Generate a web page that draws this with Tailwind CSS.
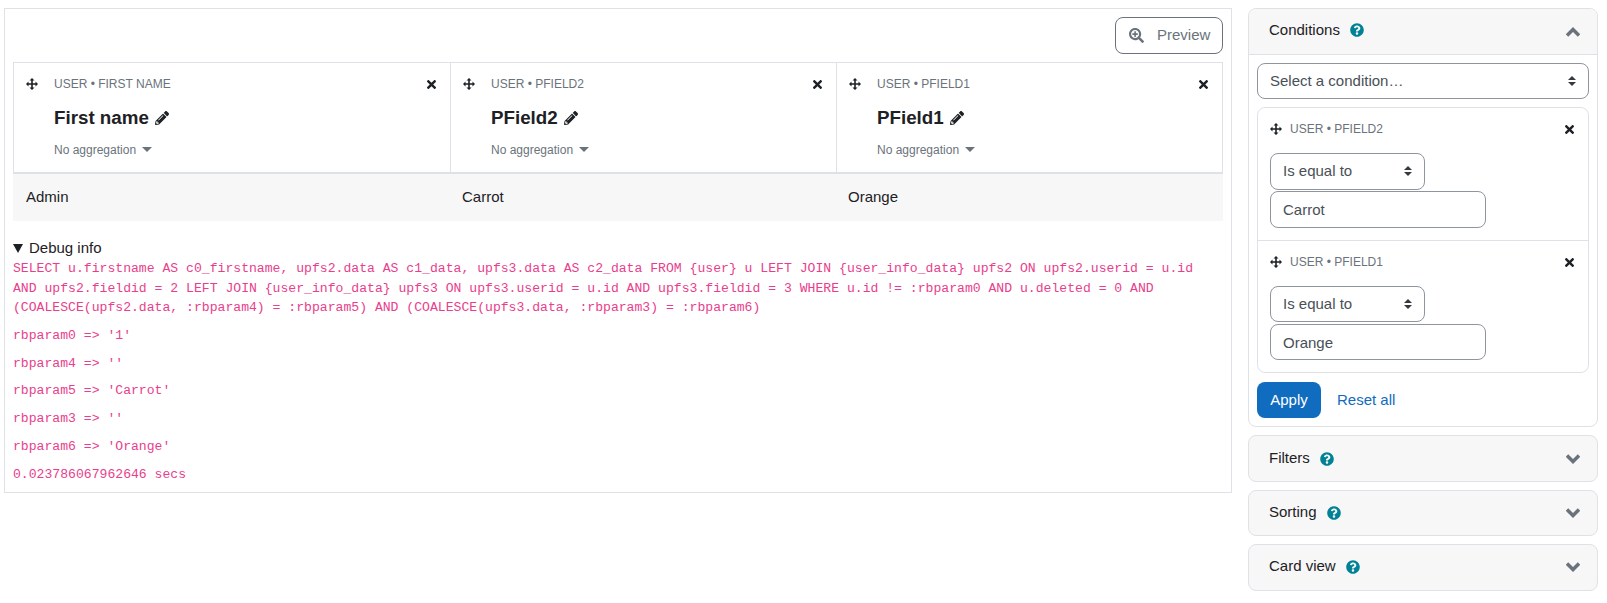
<!DOCTYPE html>
<html lang="en">
<head>
    <meta charset="UTF-8">
    <title>Report builder</title>
    <script src="https://cdn.jsdelivr.net/npm/@tailwindcss/browser@4"></script>
</head>
<body class="bg-white font-['Liberation_Sans',Arial,sans-serif] text-[15px] leading-[22.5px] text-[#1d2125] overflow-hidden">
<div class="flex items-start pt-2 pl-1 w-[1607px] h-[603px]">

    <!-- report -->
    <div class="w-[1228px] h-[485px] border border-[#dee2e6] px-2 pt-2 shrink-0">
        <div class="flex justify-end">
            <button class="h-[37px] w-[108px] flex items-center border border-[#6a737b] rounded-lg text-[#6a737b] pl-[13px]">
                <svg class="w-[15px] h-[15px] mr-[13px] fill-current" viewBox="0 0 512 512"><path d="M304 192v32c0 6.6-5.4 12-12 12h-56v56c0 6.6-5.4 12-12 12h-32c-6.6 0-12-5.4-12-12v-56h-56c-6.6 0-12-5.4-12-12v-32c0-6.6 5.4-12 12-12h56v-56c0-6.6 5.4-12 12-12h32c6.6 0 12 5.4 12 12v56h56c6.6 0 12 5.4 12 12zm201 284.7L476.7 505c-9.4 9.4-24.6 9.4-33.9 0L343 405.3c-4.5-4.5-7-10.6-7-17V372c-35.3 27.6-79.7 44-128 44C93.1 416 0 322.9 0 208S93.1 0 208 0s208 93.1 208 208c0 48.3-16.4 92.7-44 128h16.3c6.4 0 12.5 2.5 17 7l99.7 99.7c9.3 9.4 9.3 24.6 0 34zM344 208c0-75.2-60.8-136-136-136S72 132.8 72 208s60.8 136 136 136 136-60.8 136-136z"/></svg>
                Preview
            </button>
        </div>

        <div class="mt-2 w-[1210px]">
            <div class="grid grid-cols-[437px_386px_385px] h-[112px] border-t border-x border-[#dee2e6] border-b-2">
                <div class="border-r border-[#dee2e6] pl-3 pr-3.5 pt-2.5 relative">
                    <div class="flex items-center h-[22px]">
                        <svg class="w-3 h-3 fill-[#1d2125] mr-4 shrink-0" viewBox="0 0 12 12"><path d="M6 0 8.5 2.5H6.8V5.2H9.5V3.5L12 6 9.5 8.5V6.8H6.8V9.5H8.5L6 12 3.5 9.5H5.2V6.8H2.5V8.5L0 6 2.5 3.5V5.2H5.2V2.5H3.5Z"/></svg>
                        <span class="text-xs text-[#6a737b] uppercase">User • First name</span>
                        <svg class="w-[9px] h-[9px] fill-[#1d2125] ml-auto" viewBox="0 80 352 352"><path d="M242.72 256l100.07-100.07c12.28-12.28 12.28-32.19 0-44.48l-22.24-22.24c-12.28-12.28-32.19-12.28-44.48 0L176 189.28 75.93 89.21c-12.28-12.28-32.19-12.28-44.48 0L9.21 111.45c-12.28 12.28-12.28 32.19 0 44.48L109.28 256 9.21 356.07c-12.28 12.28-12.28 32.19 0 44.48l22.24 22.24c12.28 12.28 32.2 12.28 44.48 0L176 322.72l100.07 100.07c12.28 12.28 32.2 12.28 44.48 0l22.24-22.24c12.28-12.28 12.28-32.19 0-44.48L242.72 256z"/></svg>
                    </div>
                    <div class="flex items-center pl-7 mt-[11px] h-[24px] text-[18.75px] font-bold">
                        First name
                        <svg class="w-[14px] h-[14px] fill-[#1d2125] ml-1.5" viewBox="0 0 512 512"><path d="M497.9 142.1l-46.1 46.1c-4.7 4.7-12.3 4.7-17 0l-111-111c-4.7-4.7-4.7-12.3 0-17l46.1-46.1c18.7-18.7 49.1-18.7 67.9 0l60.1 60.1c18.8 18.7 18.8 49.1 0 67.9zM284.2 99.8L21.6 362.4.4 483.9c-2.9 16.4 11.4 30.6 27.8 27.8l121.5-21.3 262.6-262.6c4.7-4.7 4.7-12.3 0-17l-111-111c-4.8-4.7-12.4-4.7-17.1 0zM124.1 339.9c-5.5-5.5-5.5-14.3 0-19.8l154-154c5.5-5.5 14.3-5.5 19.8 0s5.5 14.3 0 19.8l-154 154c-5.5 5.5-14.3 5.5-19.8 0zM88 424h48v36.3l-64.5 11.3-31.1-31.1L51.7 376H88v48z"/></svg>
                    </div>
                    <div class="flex items-center pl-7 mt-[9px] h-[22px] text-xs text-[#6a737b]">
                        No aggregation
                        <span class="ml-1.5 w-0 h-0 border-x-[5px] border-x-transparent border-t-[5px] border-t-[#6a737b] -mt-0.5"></span>
                    </div>
                </div>
                <div class="border-r border-[#dee2e6] pl-3 pr-3.5 pt-2.5">
                    <div class="flex items-center h-[22px]">
                        <svg class="w-3 h-3 fill-[#1d2125] mr-4 shrink-0" viewBox="0 0 12 12"><path d="M6 0 8.5 2.5H6.8V5.2H9.5V3.5L12 6 9.5 8.5V6.8H6.8V9.5H8.5L6 12 3.5 9.5H5.2V6.8H2.5V8.5L0 6 2.5 3.5V5.2H5.2V2.5H3.5Z"/></svg>
                        <span class="text-xs text-[#6a737b] uppercase">User • PField2</span>
                        <svg class="w-[9px] h-[9px] fill-[#1d2125] ml-auto" viewBox="0 80 352 352"><path d="M242.72 256l100.07-100.07c12.28-12.28 12.28-32.19 0-44.48l-22.24-22.24c-12.28-12.28-32.19-12.28-44.48 0L176 189.28 75.93 89.21c-12.28-12.28-32.19-12.28-44.48 0L9.21 111.45c-12.28 12.28-12.28 32.19 0 44.48L109.28 256 9.21 356.07c-12.28 12.28-12.28 32.19 0 44.48l22.24 22.24c12.28 12.28 32.2 12.28 44.48 0L176 322.72l100.07 100.07c12.28 12.28 32.2 12.28 44.48 0l22.24-22.24c12.28-12.28 12.28-32.19 0-44.48L242.72 256z"/></svg>
                    </div>
                    <div class="flex items-center pl-7 mt-[11px] h-[24px] text-[18.75px] font-bold">
                        PField2
                        <svg class="w-[14px] h-[14px] fill-[#1d2125] ml-1.5" viewBox="0 0 512 512"><path d="M497.9 142.1l-46.1 46.1c-4.7 4.7-12.3 4.7-17 0l-111-111c-4.7-4.7-4.7-12.3 0-17l46.1-46.1c18.7-18.7 49.1-18.7 67.9 0l60.1 60.1c18.8 18.7 18.8 49.1 0 67.9zM284.2 99.8L21.6 362.4.4 483.9c-2.9 16.4 11.4 30.6 27.8 27.8l121.5-21.3 262.6-262.6c4.7-4.7 4.7-12.3 0-17l-111-111c-4.8-4.7-12.4-4.7-17.1 0zM124.1 339.9c-5.5-5.5-5.5-14.3 0-19.8l154-154c5.5-5.5 14.3-5.5 19.8 0s5.5 14.3 0 19.8l-154 154c-5.5 5.5-14.3 5.5-19.8 0zM88 424h48v36.3l-64.5 11.3-31.1-31.1L51.7 376H88v48z"/></svg>
                    </div>
                    <div class="flex items-center pl-7 mt-[9px] h-[22px] text-xs text-[#6a737b]">
                        No aggregation
                        <span class="ml-1.5 w-0 h-0 border-x-[5px] border-x-transparent border-t-[5px] border-t-[#6a737b] -mt-0.5"></span>
                    </div>
                </div>
                <div class="pl-3 pr-3.5 pt-2.5">
                    <div class="flex items-center h-[22px]">
                        <svg class="w-3 h-3 fill-[#1d2125] mr-4 shrink-0" viewBox="0 0 12 12"><path d="M6 0 8.5 2.5H6.8V5.2H9.5V3.5L12 6 9.5 8.5V6.8H6.8V9.5H8.5L6 12 3.5 9.5H5.2V6.8H2.5V8.5L0 6 2.5 3.5V5.2H5.2V2.5H3.5Z"/></svg>
                        <span class="text-xs text-[#6a737b] uppercase">User • PField1</span>
                        <svg class="w-[9px] h-[9px] fill-[#1d2125] ml-auto" viewBox="0 80 352 352"><path d="M242.72 256l100.07-100.07c12.28-12.28 12.28-32.19 0-44.48l-22.24-22.24c-12.28-12.28-32.19-12.28-44.48 0L176 189.28 75.93 89.21c-12.28-12.28-32.19-12.28-44.48 0L9.21 111.45c-12.28 12.28-12.28 32.19 0 44.48L109.28 256 9.21 356.07c-12.28 12.28-12.28 32.19 0 44.48l22.24 22.24c12.28 12.28 32.2 12.28 44.48 0L176 322.72l100.07 100.07c12.28 12.28 32.2 12.28 44.48 0l22.24-22.24c12.28-12.28 12.28-32.19 0-44.48L242.72 256z"/></svg>
                    </div>
                    <div class="flex items-center pl-7 mt-[11px] h-[24px] text-[18.75px] font-bold">
                        PField1
                        <svg class="w-[14px] h-[14px] fill-[#1d2125] ml-1.5" viewBox="0 0 512 512"><path d="M497.9 142.1l-46.1 46.1c-4.7 4.7-12.3 4.7-17 0l-111-111c-4.7-4.7-4.7-12.3 0-17l46.1-46.1c18.7-18.7 49.1-18.7 67.9 0l60.1 60.1c18.8 18.7 18.8 49.1 0 67.9zM284.2 99.8L21.6 362.4.4 483.9c-2.9 16.4 11.4 30.6 27.8 27.8l121.5-21.3 262.6-262.6c4.7-4.7 4.7-12.3 0-17l-111-111c-4.8-4.7-12.4-4.7-17.1 0zM124.1 339.9c-5.5-5.5-5.5-14.3 0-19.8l154-154c5.5-5.5 14.3-5.5 19.8 0s5.5 14.3 0 19.8l-154 154c-5.5 5.5-14.3 5.5-19.8 0zM88 424h48v36.3l-64.5 11.3-31.1-31.1L51.7 376H88v48z"/></svg>
                    </div>
                    <div class="flex items-center pl-7 mt-[9px] h-[22px] text-xs text-[#6a737b]">
                        No aggregation
                        <span class="ml-1.5 w-0 h-0 border-x-[5px] border-x-transparent border-t-[5px] border-t-[#6a737b] -mt-0.5"></span>
                    </div>
                </div>
            </div>
            <div class="grid grid-cols-[436px_386px_388px] h-[47px] items-center bg-[#f7f7f7]">
                <div class="pl-[13px]">Admin</div>
                <div class="pl-[13px]">Carrot</div>
                <div class="pl-[13px]">Orange</div>
            </div>
        </div>

        <!-- debug -->
        <div class="mt-4">
            <div class="flex items-center h-[22px]"><span class="w-0 h-0 border-x-[5px] border-x-transparent border-t-[9px] border-t-[#1d2125] mr-[6px]"></span>Debug info</div>
            <div class="font-['Liberation_Mono',monospace] text-[13.125px] leading-[19.6875px] text-[#e83e8c]">
                <p class="mb-2">SELECT u.firstname AS c0_firstname, upfs2.data AS c1_data, upfs3.data AS c2_data FROM {user} u LEFT JOIN {user_info_data} upfs2 ON upfs2.userid = u.id AND upfs2.fieldid = 2 LEFT JOIN {user_info_data} upfs3 ON upfs3.userid = u.id AND upfs3.fieldid = 3 WHERE u.id != :rbparam0 AND u.deleted = 0 AND (COALESCE(upfs2.data, :rbparam4) = :rbparam5) AND (COALESCE(upfs3.data, :rbparam3) = :rbparam6)</p>
                <p class="mb-2">rbparam0 =&gt; '1'</p>
                <p class="mb-2">rbparam4 =&gt; ''</p>
                <p class="mb-2">rbparam5 =&gt; 'Carrot'</p>
                <p class="mb-2">rbparam3 =&gt; ''</p>
                <p class="mb-2">rbparam6 =&gt; 'Orange'</p>
                <p>0.023786067962646 secs</p>
            </div>
        </div>
    </div>

    <!-- sidebar -->
    <div class="w-[350px] ml-4 shrink-0 flex flex-col gap-2">
        <div class="border border-[#dee2e6] rounded-lg h-[419px]">
            <div class="h-[46px] bg-[#f7f7f7] border-b border-[#dee2e6] rounded-t-lg flex items-center pl-5 pr-[17px] pb-[3px]">
                Conditions
                <svg class="w-[14px] h-[14px] fill-[#008196] ml-[10px]" viewBox="0 0 512 512"><path d="M504 256c0 136.997-111.043 248-248 248S8 392.997 8 256C8 119.083 119.043 8 256 8s248 111.083 248 248zM262.655 90c-54.497 0-89.255 22.957-116.549 63.758-3.536 5.286-2.353 12.415 2.715 16.258l34.699 26.31c5.205 3.947 12.621 3.008 16.665-2.122 17.864-22.658 30.113-35.797 57.303-35.797 20.429 0 45.698 13.148 45.698 32.958 0 14.976-12.363 22.667-32.534 33.976C247.128 238.528 216 254.941 216 296v4c0 6.627 5.373 12 12 12h56c6.627 0 12-5.373 12-12v-1.333c0-28.462 83.186-29.647 83.186-106.667 0-58.002-60.165-102-116.531-102zM256 338c-25.365 0-46 20.635-46 46 0 25.364 20.635 46 46 46s46-20.636 46-46c0-25.365-20.635-46-46-46z"/></svg>
                <svg class="w-[14px] h-[10px] ml-auto mt-[3px] fill-none stroke-[#6a737b] stroke-[3.5px]" viewBox="0 0 14 10"><path d="M1 8.5 7 2.5 13 8.5"/></svg>
            </div>
            <div class="px-2 pt-2">
                <div class="relative">
                    <select class="appearance-none w-full h-9 border border-[#8f959e] rounded-lg pl-3 text-[#495057]"><option>Select a condition…</option></select>
                    <svg class="absolute right-[13px] top-[13px] w-2 h-[10px] fill-[#343a40]" viewBox="0 0 8 10"><path d="M4 0 8 4H0zM4 10 0 6h8z"/></svg>
                </div>

                <div class="mt-2 border border-[#dee2e6] rounded-lg h-[266px]">
                    <div class="h-[133px] border-b border-[#dee2e6] px-3 pt-2.5">
                        <div class="flex items-center h-[22px]">
                            <svg class="w-3 h-3 fill-[#1d2125] mr-2 shrink-0" viewBox="0 0 12 12"><path d="M6 0 8.5 2.5H6.8V5.2H9.5V3.5L12 6 9.5 8.5V6.8H6.8V9.5H8.5L6 12 3.5 9.5H5.2V6.8H2.5V8.5L0 6 2.5 3.5V5.2H5.2V2.5H3.5Z"/></svg>
                            <span class="text-xs text-[#6a737b]">USER • PFIELD2</span>
                            <svg class="w-[9px] h-[9px] fill-[#1d2125] ml-auto mr-[2px]" viewBox="0 80 352 352"><path d="M242.72 256l100.07-100.07c12.28-12.28 12.28-32.19 0-44.48l-22.24-22.24c-12.28-12.28-32.19-12.28-44.48 0L176 189.28 75.93 89.21c-12.28-12.28-32.19-12.28-44.48 0L9.21 111.45c-12.28 12.28-12.28 32.19 0 44.48L109.28 256 9.21 356.07c-12.28 12.28-12.28 32.19 0 44.48l22.24 22.24c12.28 12.28 32.2 12.28 44.48 0L176 322.72l100.07 100.07c12.28 12.28 32.2 12.28 44.48 0l22.24-22.24c12.28-12.28 12.28-32.19 0-44.48L242.72 256z"/></svg>
                        </div>
                        <div class="relative w-[155px] mt-[13px]">
                            <select class="appearance-none w-full h-[37px] border border-[#8f959e] rounded-lg pl-3 text-[#495057]"><option>Is equal to</option></select>
                            <svg class="absolute right-[13px] top-[13px] w-2 h-[10px] fill-[#343a40]" viewBox="0 0 8 10"><path d="M4 0 8 4H0zM4 10 0 6h8z"/></svg>
                        </div>
                        <input value="Carrot" class="block mt-[1px] w-[216px] h-[37px] border border-[#8f959e] rounded-lg px-3 text-[#495057]">
                    </div>
                    <div class="px-3 pt-2.5">
                        <div class="flex items-center h-[22px]">
                            <svg class="w-3 h-3 fill-[#1d2125] mr-2 shrink-0" viewBox="0 0 12 12"><path d="M6 0 8.5 2.5H6.8V5.2H9.5V3.5L12 6 9.5 8.5V6.8H6.8V9.5H8.5L6 12 3.5 9.5H5.2V6.8H2.5V8.5L0 6 2.5 3.5V5.2H5.2V2.5H3.5Z"/></svg>
                            <span class="text-xs text-[#6a737b]">USER • PFIELD1</span>
                            <svg class="w-[9px] h-[9px] fill-[#1d2125] ml-auto mr-[2px]" viewBox="0 80 352 352"><path d="M242.72 256l100.07-100.07c12.28-12.28 12.28-32.19 0-44.48l-22.24-22.24c-12.28-12.28-32.19-12.28-44.48 0L176 189.28 75.93 89.21c-12.28-12.28-32.19-12.28-44.48 0L9.21 111.45c-12.28 12.28-12.28 32.19 0 44.48L109.28 256 9.21 356.07c-12.28 12.28-12.28 32.19 0 44.48l22.24 22.24c12.28 12.28 32.2 12.28 44.48 0L176 322.72l100.07 100.07c12.28 12.28 32.2 12.28 44.48 0l22.24-22.24c12.28-12.28 12.28-32.19 0-44.48L242.72 256z"/></svg>
                        </div>
                        <div class="relative w-[155px] mt-[13px]">
                            <select class="appearance-none w-full h-[36px] border border-[#8f959e] rounded-lg pl-3 text-[#495057]"><option>Is equal to</option></select>
                            <svg class="absolute right-[13px] top-[13px] w-2 h-[10px] fill-[#343a40]" viewBox="0 0 8 10"><path d="M4 0 8 4H0zM4 10 0 6h8z"/></svg>
                        </div>
                        <input value="Orange" class="block mt-[2px] w-[216px] h-[36px] border border-[#8f959e] rounded-lg px-3 text-[#495057]">
                    </div>
                </div>

                <div class="flex items-center mt-[9px]">
                    <button class="h-9 w-16 bg-[#0f6cbf] text-white rounded-lg">Apply</button>
                    <a class="ml-4 text-[#0f6cbf]">Reset all</a>
                </div>
            </div>
        </div>

        <div class="h-[47px] border border-[#dee2e6] rounded-lg bg-[#f7f7f7] flex items-center pl-5 pr-[17px]">
            Filters
            <svg class="w-[14px] h-[14px] fill-[#008196] ml-[10px]" viewBox="0 0 512 512"><path d="M504 256c0 136.997-111.043 248-248 248S8 392.997 8 256C8 119.083 119.043 8 256 8s248 111.083 248 248zM262.655 90c-54.497 0-89.255 22.957-116.549 63.758-3.536 5.286-2.353 12.415 2.715 16.258l34.699 26.31c5.205 3.947 12.621 3.008 16.665-2.122 17.864-22.658 30.113-35.797 57.303-35.797 20.429 0 45.698 13.148 45.698 32.958 0 14.976-12.363 22.667-32.534 33.976C247.128 238.528 216 254.941 216 296v4c0 6.627 5.373 12 12 12h56c6.627 0 12-5.373 12-12v-1.333c0-28.462 83.186-29.647 83.186-106.667 0-58.002-60.165-102-116.531-102zM256 338c-25.365 0-46 20.635-46 46 0 25.364 20.635 46 46 46s46-20.636 46-46c0-25.365-20.635-46-46-46z"/></svg>
            <svg class="w-[14px] h-[10px] ml-auto fill-none stroke-[#6a737b] stroke-[3.5px]" viewBox="0 0 14 10"><path d="M1 1.5 7 7.5 13 1.5"/></svg>
        </div>
        <div class="h-[46px] border border-[#dee2e6] rounded-lg bg-[#f7f7f7] flex items-center pl-5 pr-[17px] pb-[1px]">
            Sorting
            <svg class="w-[14px] h-[14px] fill-[#008196] ml-[10px]" viewBox="0 0 512 512"><path d="M504 256c0 136.997-111.043 248-248 248S8 392.997 8 256C8 119.083 119.043 8 256 8s248 111.083 248 248zM262.655 90c-54.497 0-89.255 22.957-116.549 63.758-3.536 5.286-2.353 12.415 2.715 16.258l34.699 26.31c5.205 3.947 12.621 3.008 16.665-2.122 17.864-22.658 30.113-35.797 57.303-35.797 20.429 0 45.698 13.148 45.698 32.958 0 14.976-12.363 22.667-32.534 33.976C247.128 238.528 216 254.941 216 296v4c0 6.627 5.373 12 12 12h56c6.627 0 12-5.373 12-12v-1.333c0-28.462 83.186-29.647 83.186-106.667 0-58.002-60.165-102-116.531-102zM256 338c-25.365 0-46 20.635-46 46 0 25.364 20.635 46 46 46s46-20.636 46-46c0-25.365-20.635-46-46-46z"/></svg>
            <svg class="w-[14px] h-[10px] ml-auto fill-none stroke-[#6a737b] stroke-[3.5px]" viewBox="0 0 14 10"><path d="M1 1.5 7 7.5 13 1.5"/></svg>
        </div>
        <div class="h-[47px] border border-[#dee2e6] rounded-lg bg-[#f7f7f7] flex items-center pl-5 pr-[17px] pb-[2px]">
            Card view
            <svg class="w-[14px] h-[14px] fill-[#008196] ml-[10px]" viewBox="0 0 512 512"><path d="M504 256c0 136.997-111.043 248-248 248S8 392.997 8 256C8 119.083 119.043 8 256 8s248 111.083 248 248zM262.655 90c-54.497 0-89.255 22.957-116.549 63.758-3.536 5.286-2.353 12.415 2.715 16.258l34.699 26.31c5.205 3.947 12.621 3.008 16.665-2.122 17.864-22.658 30.113-35.797 57.303-35.797 20.429 0 45.698 13.148 45.698 32.958 0 14.976-12.363 22.667-32.534 33.976C247.128 238.528 216 254.941 216 296v4c0 6.627 5.373 12 12 12h56c6.627 0 12-5.373 12-12v-1.333c0-28.462 83.186-29.647 83.186-106.667 0-58.002-60.165-102-116.531-102zM256 338c-25.365 0-46 20.635-46 46 0 25.364 20.635 46 46 46s46-20.636 46-46c0-25.365-20.635-46-46-46z"/></svg>
            <svg class="w-[14px] h-[10px] ml-auto fill-none stroke-[#6a737b] stroke-[3.5px]" viewBox="0 0 14 10"><path d="M1 1.5 7 7.5 13 1.5"/></svg>
        </div>
    </div>
</div>
</body>
</html>
